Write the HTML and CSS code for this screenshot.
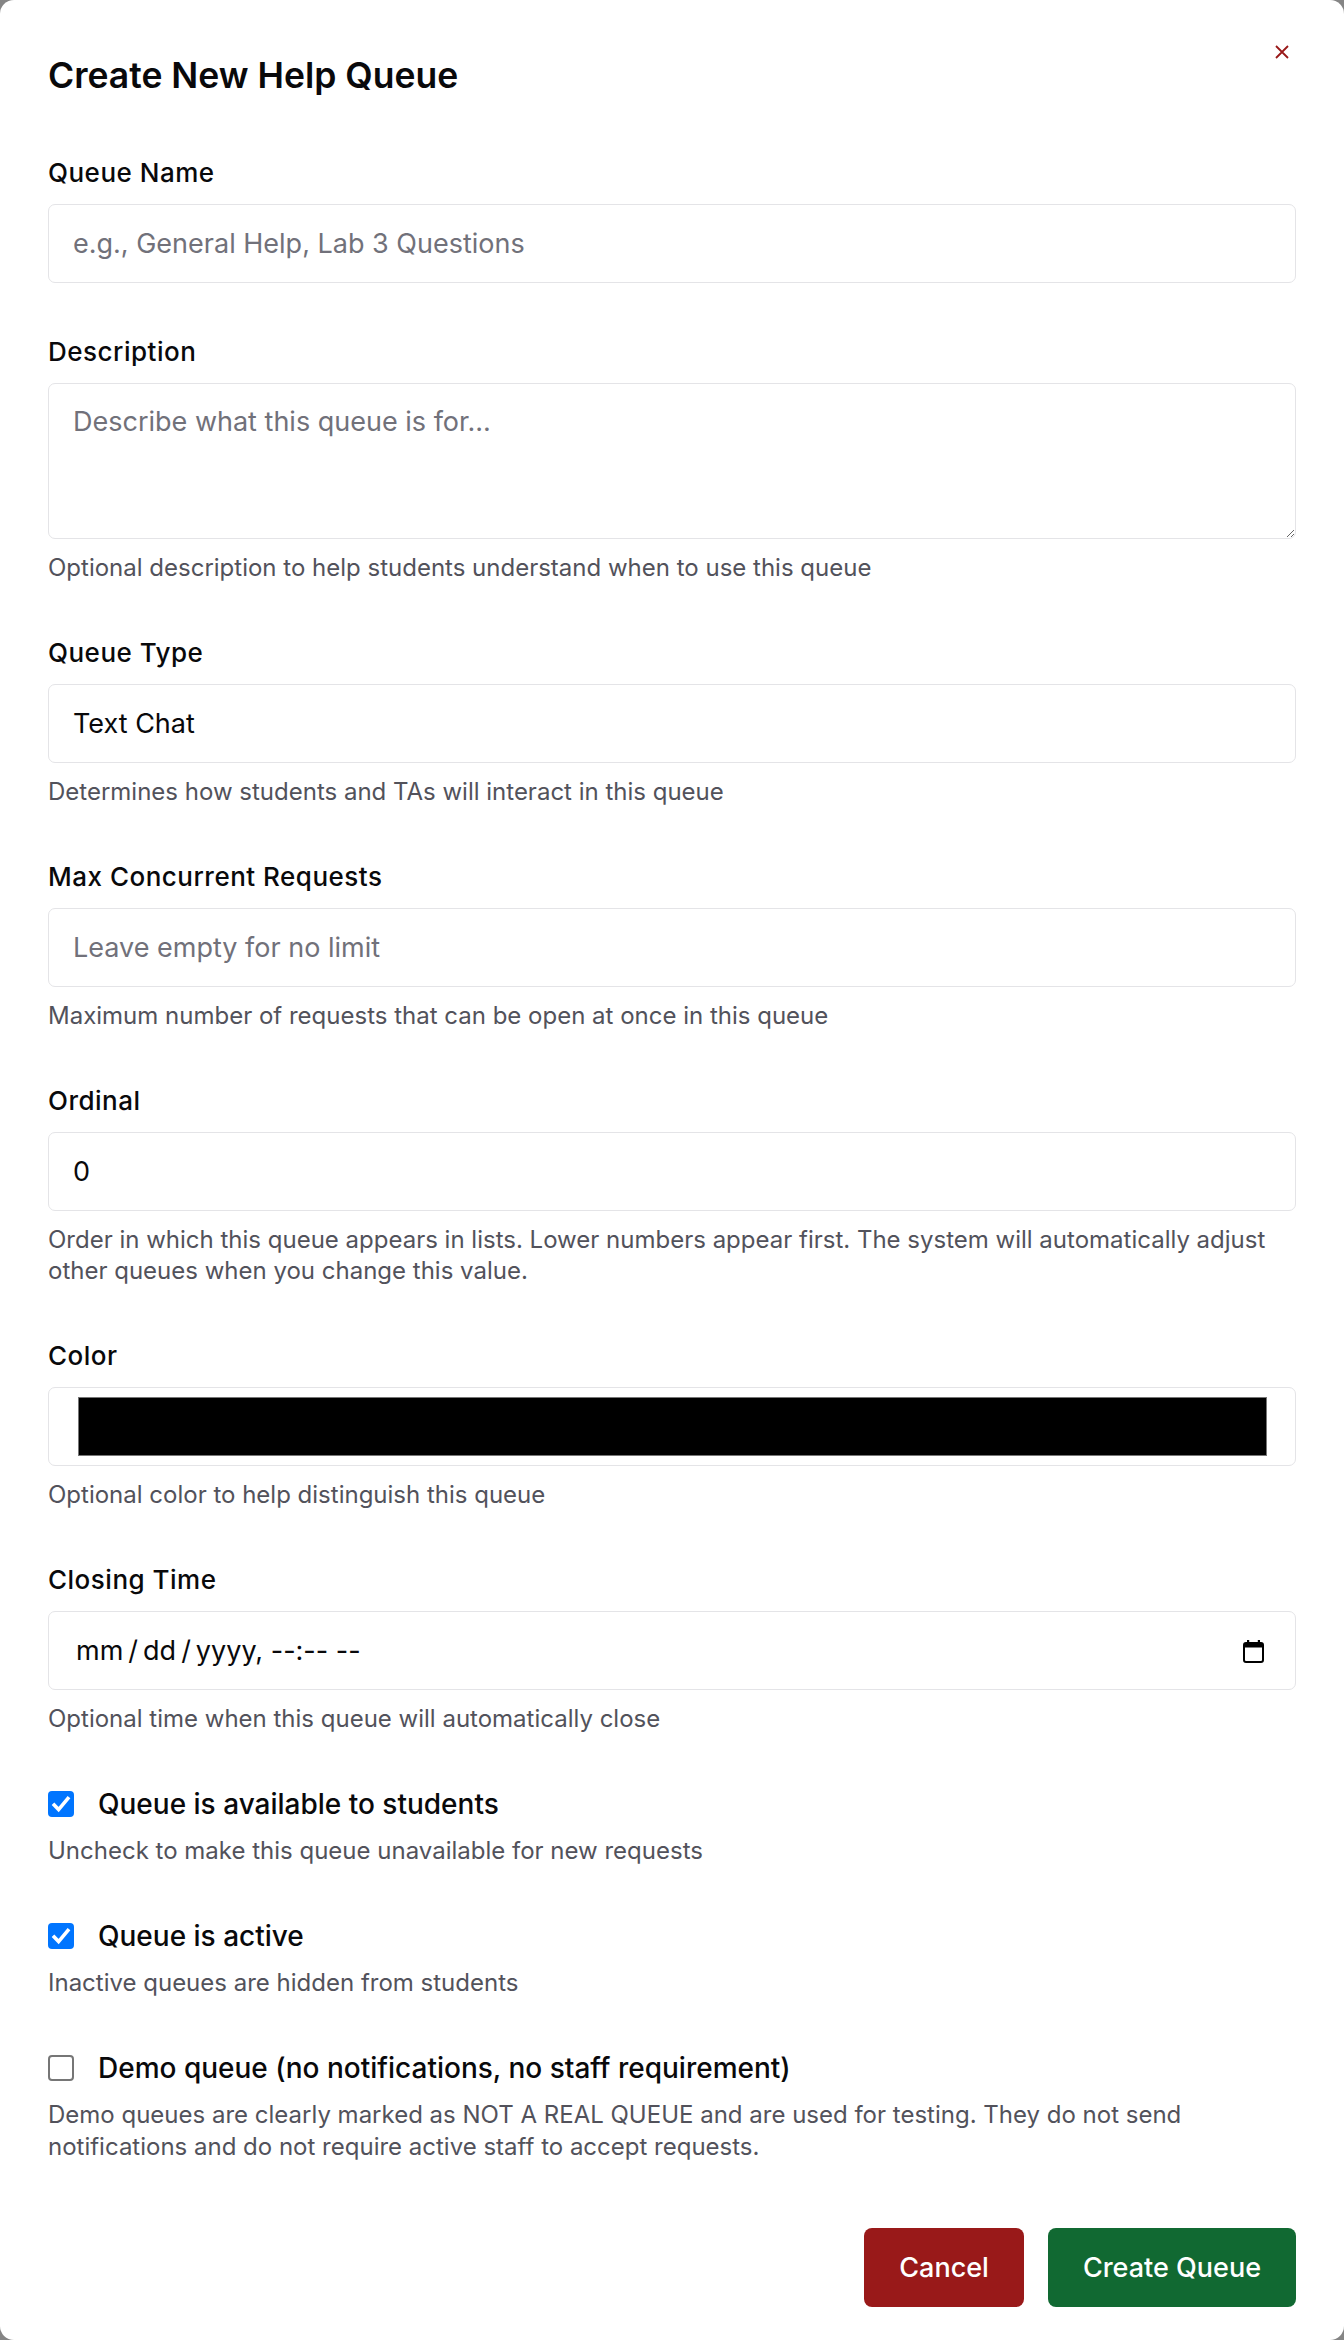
FILE: index.html
```html
<!DOCTYPE html>
<html lang="en">
<head>
<meta charset="utf-8">
<title>Create New Help Queue</title>
<link rel="stylesheet" href="styles.css">
</head>
<body>
<div class="dialog" role="dialog" aria-labelledby="dlg-title">
  <button class="close" type="button" aria-label="Close">
    <svg viewBox="0 0 16 16" width="16" height="16"><path d="M2 2 L14 14 M14 2 L2 14" stroke="currentColor" stroke-width="1.8" fill="none"/></svg>
  </button>
  <h2 class="title" id="dlg-title">Create New Help Queue</h2>
  <form class="form">
    <div class="field">
      <label class="label" for="qname">Queue Name</label>
      <input class="control" id="qname" type="text" placeholder="e.g., General Help, Lab 3 Questions">
    </div>
    <div class="field">
      <label class="label" for="qdesc">Description</label>
      <textarea class="control area" id="qdesc" placeholder="Describe what this queue is for..."></textarea>
      <p class="help">Optional description to help students understand when to use this queue</p>
    </div>
    <div class="field">
      <label class="label" for="qtype">Queue Type</label>
      <select class="control select" id="qtype"><option>Text Chat</option><option>Video</option><option>In Person</option></select>
      <p class="help">Determines how students and TAs will interact in this queue</p>
    </div>
    <div class="field">
      <label class="label" for="qmax">Max Concurrent Requests</label>
      <input class="control" id="qmax" type="text" placeholder="Leave empty for no limit">
      <p class="help">Maximum number of requests that can be open at once in this queue</p>
    </div>
    <div class="field">
      <label class="label" for="qord">Ordinal</label>
      <input class="control" id="qord" type="text" value="0">
      <p class="help">Order in which this queue appears in lists. Lower numbers appear first. The system will automatically adjust other queues when you change this value.</p>
    </div>
    <div class="field">
      <label class="label" for="qcolor">Color</label>
      <div class="control colorbox" id="qcolor"><span class="swatch"></span></div>
      <p class="help">Optional color to help distinguish this queue</p>
    </div>
    <div class="field">
      <label class="label" for="qclose">Closing Time</label>
      <div class="control datebox" id="qclose">
        <span class="datetext">mm<span class="sep">/</span>dd<span class="sep">/</span>yyyy, --:-- --</span>
        <svg class="cal" viewBox="0 0 21 24" width="21" height="24"><rect x="1" y="4" width="19" height="19" rx="2" fill="none" stroke="#000" stroke-width="2"/><rect x="1" y="4" width="19" height="4.5" fill="#000"/><rect x="4" y="1" width="2.2" height="4" fill="#000"/><rect x="14.8" y="1" width="2.2" height="4" fill="#000"/></svg>
      </div>
      <p class="help">Optional time when this queue will automatically close</p>
    </div>
    <div class="field">
      <label class="check">
        <span class="box on"><svg viewBox="0 0 26 26" width="26" height="26"><path d="M5 12.8 L10.6 18.6 L21 6.2" stroke="#fff" stroke-width="3.6" fill="none"/></svg></span>
        <span>Queue is available to students</span>
      </label>
      <p class="help">Uncheck to make this queue unavailable for new requests</p>
    </div>
    <div class="field">
      <label class="check">
        <span class="box on"><svg viewBox="0 0 26 26" width="26" height="26"><path d="M5 12.8 L10.6 18.6 L21 6.2" stroke="#fff" stroke-width="3.6" fill="none"/></svg></span>
        <span>Queue is active</span>
      </label>
      <p class="help">Inactive queues are hidden from students</p>
    </div>
    <div class="field">
      <label class="check">
        <span class="box"></span>
        <span>Demo queue (no notifications, no staff requirement)</span>
      </label>
      <p class="help">Demo queues are clearly marked as NOT A REAL QUEUE and are used for testing. They do not send notifications and do not require active staff to accept requests.</p>
    </div>
  </form>
  <div class="footer">
    <button class="btn btn-cancel" type="button">Cancel</button>
    <button class="btn btn-create" type="button">Create Queue</button>
  </div>
</div>
</body>
</html>
```
FILE: styles.css
```css
* {
  box-sizing: border-box;
}

html,
body {
  margin: 0;
  padding: 0;
}

body {
  background: #858585;
  font-family: Inter, "Liberation Sans", sans-serif;
  color: #09090b;
}

.dialog {
  position: relative;
  background: #ffffff;
  border-radius: 14px;
  min-height: 2340px;
  padding: 51.5px 48px 30px;
}

.close {
  position: absolute;
  top: 44px;
  right: 54px;
  width: 16px;
  height: 16px;
  padding: 0;
  border: 0;
  background: none;
  color: #991919;
  display: flex;
  cursor: pointer;
}

.title {
  margin: 0 0 55px;
  font-size: 35.5px;
  line-height: 48px;
  font-weight: 600;
}

.form {
  display: flex;
  flex-direction: column;
  gap: 51.5px;
}

.field {
  display: flex;
  flex-direction: column;
}

.label {
  display: block;
  font-size: 26px;
  line-height: 36px;
  font-weight: 500;
  letter-spacing: 0.5px;
  margin-bottom: 13px;
}

.control {
  width: 100%;
  height: 79px;
  border: 1.5px solid #e4e4e7;
  border-radius: 7px;
  padding: 0 24px;
  font-family: inherit;
  font-size: 27px;
  color: #09090b;
  background: #ffffff;
  outline: none;
}

.control::placeholder {
  color: #71717a;
}

.area {
  height: 155.5px;
  padding: 18px 24px;
  line-height: 40px;
  resize: vertical;
}

.select {
  appearance: none;
  -webkit-appearance: none;
}

.colorbox {
  display: flex;
  padding: 9px 28px 9px 29px;
}

.swatch {
  flex: 1;
  background: #000000;
  border: 1.5px solid #767676;
}

.datebox {
  display: flex;
  align-items: center;
  justify-content: space-between;
  padding: 0 31px 0 27px;
}

.datetext {
  white-space: pre;
}

.sep {
  margin: 0 5px;
}

.cal {
  display: block;
}

.help {
  margin: 13px 0 0;
  font-size: 24px;
  line-height: 31.5px;
  color: #52525b;
}

.check {
  display: flex;
  align-items: center;
  gap: 24px;
  font-size: 28px;
  line-height: 36px;
  font-weight: 500;
}

.box {
  width: 26px;
  height: 26px;
  flex: none;
  border-radius: 4px;
  border: 2px solid #767676;
  background: #ffffff;
  display: flex;
  align-items: center;
  justify-content: center;
}

.box.on {
  border: 0;
  background: #0075ff;
}

.box svg {
  display: block;
}

.footer {
  display: flex;
  justify-content: flex-end;
  gap: 24px;
  margin-top: 65.5px;
}

.btn {
  height: 79px;
  padding: 0 35px;
  border: 0;
  border-radius: 8px;
  font-family: inherit;
  font-size: 27px;
  font-weight: 500;
  color: #ffffff;
  cursor: pointer;
}

.btn-cancel {
  background: #991919;
}

.btn-create {
  background: #116932;
}
```
